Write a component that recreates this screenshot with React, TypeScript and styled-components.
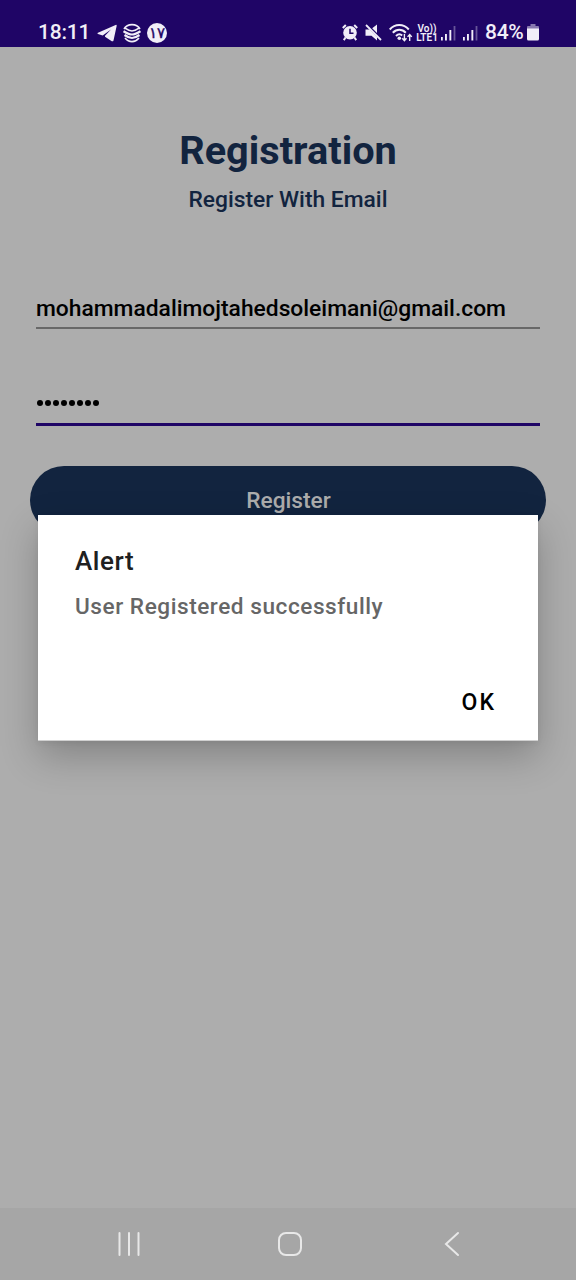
import React from 'react';
import styled, { createGlobalStyle } from 'styled-components';

const GlobalStyle = createGlobalStyle`
  *, *::before, *::after { box-sizing: border-box; }
  body { margin: 0; background: #adadad; font-family: Roboto, sans-serif; }
`;

const Screen = styled.div`
  position: relative;
  display: flex;
  flex-direction: column;
  width: 576px;
  height: 1280px;
  overflow: hidden;
  background: #adadad;
`;

const StatusBar = styled.header`
  display: flex;
  align-items: center;
  justify-content: space-between;
  height: 47px;
  padding: 18px 37px 0 38px;
  background: #1f0566;
  color: #f1eef8;
`;

const StatusGroup = styled.div<{ $gap: number }>`
  display: flex;
  align-items: center;
  gap: ${({ $gap }) => $gap}px;
  height: 29px;
  svg { display: block; flex: none; }
`;

const StatusText = styled.span<{ $width: number; $spacing?: number; $pull?: number }>`
  width: ${({ $width }) => $width}px;
  margin-right: ${({ $pull = 0 }) => -$pull}px;
  font-size: 21px;
  font-weight: 500;
  line-height: 29px;
  letter-spacing: ${({ $spacing = 0 }) => $spacing}px;
  white-space: nowrap;
`;

const DateBadge = styled.span`
  display: flex;
  align-items: center;
  justify-content: center;
  width: 20px;
  height: 20px;
  border-radius: 50%;
  background: #f1eef8;
  color: #1f0566;
  font: 400 15px/20px "DejaVu Sans", sans-serif;
  -webkit-text-stroke: 0.4px #1f0566;
`;

const NetworkLabel = styled.span`
  display: flex;
  flex-direction: column;
  align-items: center;
  width: 22px;
  margin: 0 -4px;
  font-size: 10px;
  font-weight: 600;
  line-height: 9px;
  white-space: nowrap;
`;

const Form = styled.main`
  display: flex;
  flex: 1;
  flex-direction: column;
  align-items: center;
  padding: 80px 30px 0;
`;

const Title = styled.h1`
  margin: 0;
  color: #12243f;
  font-size: 39.7px;
  font-weight: 700;
  line-height: 48px;
`;

const Subtitle = styled.p`
  margin: 10px 0 1px;
  color: #12243f;
  font-size: 22.8px;
  font-weight: 500;
  line-height: 30px;
`;

const Field = styled.div<{ $active?: boolean }>`
  width: 504px;
  height: ${({ $active }) => ($active ? 97 : 113)}px;
  padding-top: ${({ $active }) => ($active ? 55 : 78)}px;
  border-bottom: ${({ $active }) => ($active ? '3px solid #1f0566' : '2px solid #686868')};
  color: #000;
  font-size: 22.8px;
  font-weight: 500;
  line-height: 30px;
  white-space: nowrap;
`;

const Secret = styled.div`
  display: flex;
  gap: 2px;
  padding: 16px 0 0 1px;
`;

const Dot = styled.i`
  width: 6px;
  height: 6px;
  border-radius: 50%;
  background: #000;
`;

const RegisterButton = styled.button`
  width: 516px;
  height: 68px;
  margin-top: 40px;
  padding: 0 0 0 1px;
  border: 0;
  border-radius: 34px;
  background: #12243f;
  color: #adadad;
  font: 500 22.7px/70px Roboto, sans-serif;
`;

const NavBar = styled.nav`
  display: flex;
  align-items: center;
  justify-content: space-between;
  height: 72px;
  padding: 0 110px 0 112px;
  background: #a6a6a6;
  svg { display: block; }
`;

const Dialog = styled.section`
  position: absolute;
  top: 515px;
  left: 38px;
  display: flex;
  flex-direction: column;
  width: 500px;
  height: 226px;
  padding: 30px 42px 21px 37px;
  background: #fff;
  border-bottom: 1px solid #d0d0d0;
  box-shadow: 0 15px 36px rgba(0, 0, 0, 0.24), 0 2px 6px rgba(0, 0, 0, 0.06);
`;

const DialogTitle = styled.h2`
  margin: 0;
  color: #202020;
  font-size: 26px;
  font-weight: 500;
  line-height: 32px;
  letter-spacing: 0.6px;
`;

const DialogText = styled.p`
  margin: 16px 0 0;
  color: #666;
  font-size: 22.6px;
  font-weight: 500;
  line-height: 28px;
  letter-spacing: 0.55px;
`;

const DialogAction = styled.button`
  align-self: flex-end;
  margin-top: auto;
  padding: 0;
  border: 0;
  background: none;
  color: #000;
  font: 500 23px/32px Roboto, sans-serif;
  letter-spacing: 2px;
`;

const Telegram = () => (
  <svg width="20" height="18" viewBox="0 0 20 18" fill="currentColor">
    <path d="M18.6.9 1 8.7q-1.2.7 0 1.2l4.7 1.5L14 5.6l-6 6.2v.9l6.8 4.5q1.3.5 1.7-.8L19.7 1.7Q19.7.5 18.6.9z" />
  </svg>
);

const Layers = () => (
  <svg width="18" height="20" viewBox="0 0 18 20" fill="none" stroke="currentColor" strokeWidth="1.6">
    <path d="M1 6Q3.5 1.6 9 1.6T17 6M2.5 5.4Q6 8 9 8t6.5-2.6M2 15Q5 18.6 9 18.6t7-3.6" />
    <path d="M.5 8.2Q5.5 11.5 9 11.5t8.5-3.3M1.5 12Q5.8 15 9 15t7.5-3" strokeWidth="2.2" />
  </svg>
);

const Alarm = () => (
  <svg width="16" height="17" viewBox="0 0 16 17" fill="none">
    <circle cx="8" cy="8.8" r="6.8" fill="currentColor" />
    <path d="M.8 4 3.8 1M15.2 4l-3-3M3.5 13.5l-1.7 2.6M12.5 13.5l1.7 2.6" stroke="currentColor" strokeWidth="2" />
    <path d="M8 4.8v4.5h3.5" stroke="#1f0566" strokeWidth="1.5" />
  </svg>
);

const Muted = () => (
  <svg width="17" height="17" viewBox="0 0 17 17" fill="currentColor">
    <path d="M.5 5.5h4L12 13v3.5l-5.5-4.8h-6zM7.2 4.3 12 .5v8.6z" />
    <path d="m1 1 15 15" stroke="currentColor" strokeWidth="1.8" />
  </svg>
);

const Wifi = () => (
  <svg width="24" height="18" viewBox="0 0 24 18" fill="none" stroke="currentColor">
    <path d="M.7 5.5C6-.4 14.5-.4 19.8 5.5M3.8 8.8c3.8-4 9.2-4 13 0M7 12q3.2-3.2 6.2-.5" strokeWidth="2" />
    <circle cx="10.3" cy="14.2" r="1.8" fill="currentColor" stroke="none" />
    <path d="M15.4 10v6.5m-2.1-2.3 2.1 2.4 2.1-2.4M20.7 17v-6.5m-2.1 2.4 2.1-2.4 2.1 2.4" strokeWidth="1.4" />
  </svg>
);

const Signal = () => (
  <svg width="15" height="16" viewBox="0 0 15 16" fill="currentColor">
    <path d="M0 12h1.8v3.5H0zM4 9h1.9v6.5H4zM8.4 5h1.9v10.5H8.4z" />
    <path d="M12.6 1h1.8v14.5h-1.8z" opacity=".35" />
  </svg>
);

const Battery = () => (
  <svg width="12" height="17" viewBox="0 0 12 17" fill="currentColor">
    <path d="M3.5 0h5v2H11a1 1 0 0 1 1 1v2H0V3a1 1 0 0 1 1-1h2.5z" opacity=".5" />
    <path d="M0 4.5h12V15a1.5 1.5 0 0 1-1.5 1.5h-9A1.5 1.5 0 0 1 0 15z" />
  </svg>
);

const Recents = () => (
  <svg width="34" height="26" viewBox="0 0 34 26" stroke="#e8e8e8" strokeWidth="2" strokeLinecap="round">
    <path d="M7.5 2v22M17 2v22M26.5 2v22" />
  </svg>
);

const Home = () => (
  <svg width="32" height="26" viewBox="0 0 32 26" fill="none" stroke="#e8e8e8" strokeWidth="2">
    <rect x="2" y="2" width="22" height="22" rx="7" />
  </svg>
);

const Back = () => (
  <svg width="26" height="26" viewBox="0 0 26 26" fill="none" stroke="#e8e8e8" strokeWidth="2" strokeLinecap="round">
    <path d="M18 2 6 13l12 11" />
  </svg>
);

export default function App() {
  return (
    <>
      <GlobalStyle />
      <Screen>
        <StatusBar>
          <StatusGroup $gap={6}>
            <StatusText $width={53} $spacing={-0.2}>18:11</StatusText>
            <Telegram />
            <Layers />
            <DateBadge>۱۷</DateBadge>
          </StatusGroup>
          <StatusGroup $gap={7}>
            <Alarm />
            <Muted />
            <Wifi />
            <NetworkLabel>
              <span>Vo))</span>
              <span>LTE1</span>
            </NetworkLabel>
            <Signal />
            <Signal />
            <StatusText $width={38} $spacing={-0.3} $pull={3}>84%</StatusText>
            <Battery />
          </StatusGroup>
        </StatusBar>
        <Form>
          <Title>Registration</Title>
          <Subtitle>Register With Email</Subtitle>
          <Field>mohammadalimojtahedsoleimani@gmail.com</Field>
          <Field $active>
            <Secret>
              {Array.from({ length: 8 }, (_, i) => <Dot key={i} />)}
            </Secret>
          </Field>
          <RegisterButton>Register</RegisterButton>
        </Form>
        <NavBar>
          <Recents />
          <Home />
          <Back />
        </NavBar>
        <Dialog role="alertdialog">
          <DialogTitle>Alert</DialogTitle>
          <DialogText>User Registered successfully</DialogText>
          <DialogAction>OK</DialogAction>
        </Dialog>
      </Screen>
    </>
  );
}
